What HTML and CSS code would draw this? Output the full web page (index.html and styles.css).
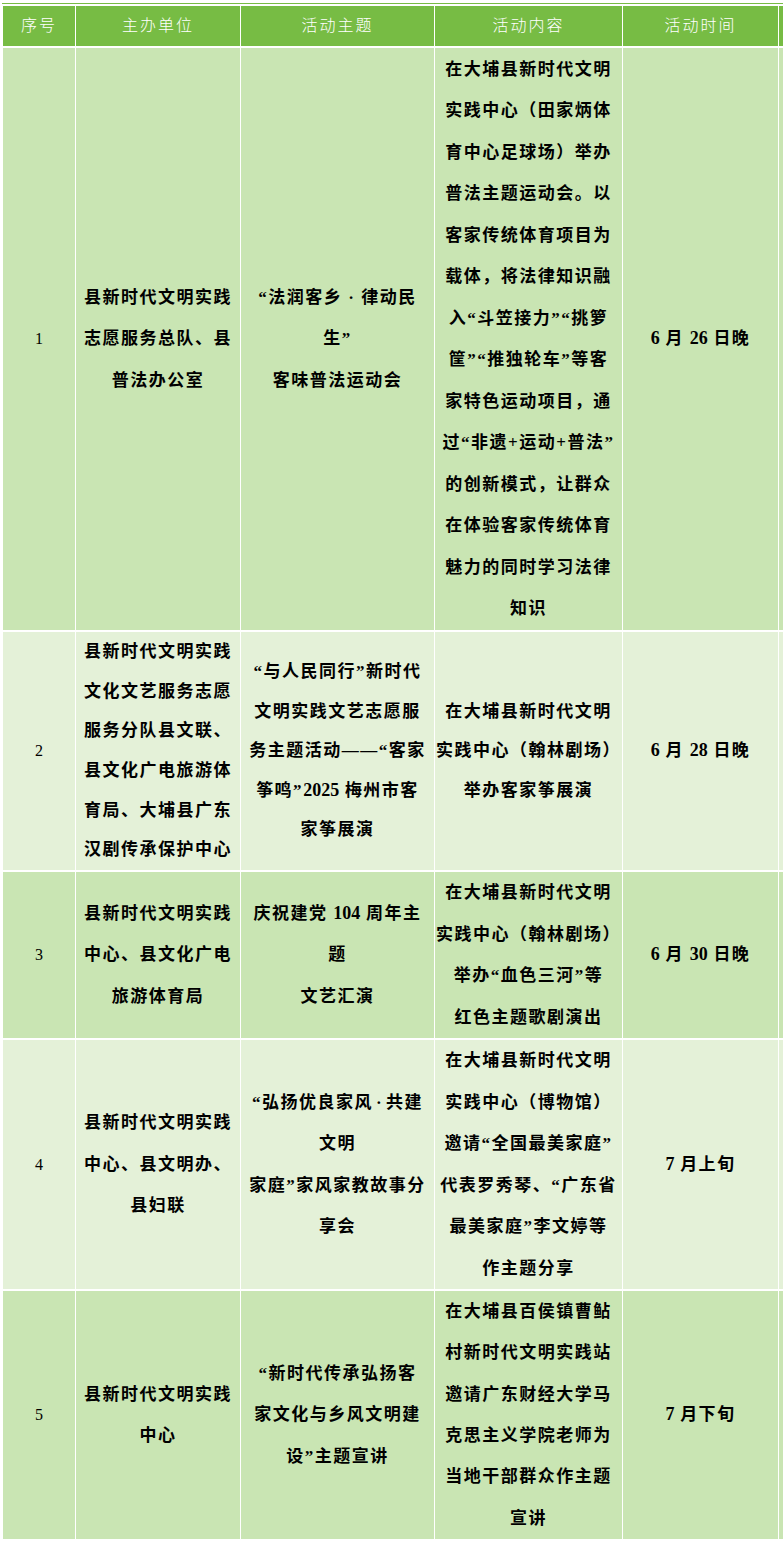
FILE: index.html
```html
<!DOCTYPE html>
<html lang="zh-CN">
<head>
<meta charset="utf-8">
<title>活动安排</title>
<link rel="stylesheet" href="styles.css">
</head>
<body>
<div class="page">
<table class="sched">
<colgroup>
<col class="c1"><col class="c2"><col class="c3"><col class="c4"><col class="c5"><col class="c6">
</colgroup>
<thead>
<tr class="head">
<th>序号</th><th>主办单位</th><th>活动主题</th><th>活动内容</th><th>活动时间</th><th></th>
</tr>
</thead>
<tbody>
<tr class="odd r1">
<td class="num">1</td>
<td>县新时代文明实践<br>志愿服务总队、县<br>普法办公室</td>
<td>“法润客乡<span class="dot">·</span>律动民<br>生”<br>客味普法运动会</td>
<td>在大埔县新时代文明<br>实践中心（田家炳体<br>育中心足球场）举办<br>普法主题运动会。以<br>客家传统体育项目为<br>载体，将法律知识融<br>入“斗笠接力”“挑箩<br>筐”“推独轮车”等客<br>家特色运动项目，通<br>过“非遗+运动+普法”<br>的创新模式，让群众<br>在体验客家传统体育<br>魅力的同时学习法律<br>知识</td>
<td><span class="d">6</span> 月 <span class="d">26</span> 日晚</td>
<td></td>
</tr>
<tr class="even r2">
<td class="num">2</td>
<td>县新时代文明实践<br>文化文艺服务志愿<br>服务分队县文联、<br>县文化广电旅游体<br>育局、大埔县广东<br>汉剧传承保护中心</td>
<td>“与人民同行”新时代<br>文明实践文艺志愿服<br>务主题活动——“客家<br>筝鸣”<span class="d">2025</span> 梅州市客<br>家筝展演</td>
<td>在大埔县新时代文明<br>实践中心（翰林剧场）<br>举办客家筝展演</td>
<td><span class="d">6</span> 月 <span class="d">28</span> 日晚</td>
<td></td>
</tr>
<tr class="odd r3">
<td class="num">3</td>
<td>县新时代文明实践<br>中心、县文化广电<br>旅游体育局</td>
<td>庆祝建党 <span class="d">104</span> 周年主<br>题<br>文艺汇演</td>
<td>在大埔县新时代文明<br>实践中心（翰林剧场）<br>举办“血色三河”等<br>红色主题歌剧演出</td>
<td><span class="d">6</span> 月 <span class="d">30</span> 日晚</td>
<td></td>
</tr>
<tr class="even r4">
<td class="num">4</td>
<td>县新时代文明实践<br>中心、县文明办、<br>县妇联</td>
<td>“弘扬优良家风<span class="dot2">·</span>共建<br>文明<br>家庭”家风家教故事分<br>享会</td>
<td>在大埔县新时代文明<br>实践中心（博物馆）<br>邀请“全国最美家庭”<br>代表罗秀琴、“广东省<br>最美家庭”李文婷等<br>作主题分享</td>
<td><span class="d">7</span> 月上旬</td>
<td></td>
</tr>
<tr class="odd r5">
<td class="num">5</td>
<td>县新时代文明实践<br>中心</td>
<td>“新时代传承弘扬客<br>家文化与乡风文明建<br>设”主题宣讲</td>
<td>在大埔县百侯镇曹鲇<br>村新时代文明实践站<br>邀请广东财经大学马<br>克思主义学院老师为<br>当地干部群众作主题<br>宣讲</td>
<td><span class="d">7</span> 月下旬</td>
<td></td>
</tr>
</tbody>
</table>
</div>
</body>
</html>
```

FILE: styles.css
```css
html, body {
  margin: 0;
  padding: 0;
  background: #ffffff;
}

.page {
  width: 783px;
  height: 1541px;
  overflow: hidden;
  padding-top: 3px;
  box-sizing: border-box;
}

.sched {
  margin-left: 2px;
  border-collapse: separate;
  border-spacing: 1px 2px;
  border-top: 1px solid #77bc44;
  table-layout: fixed;
  width: 820px;
}

.c1 { width: 72px; }
.c2 { width: 164px; }
.c3 { width: 193px; }
.c4 { width: 187px; }
.c5 { width: 155px; }
.c6 { width: 42px; }

.head th {
  background: #77bc44;
  color: #ffffff;
  height: 40px;
  padding: 0 0 4px 0;
  box-sizing: border-box;
  font-family: "Noto Sans CJK SC", sans-serif;
  font-weight: 300;
  font-size: 16px;
  letter-spacing: 2px;
  text-align: center;
  vertical-align: middle;
}

td {
  padding: 0;
  text-align: center;
  vertical-align: middle;
  white-space: nowrap;
  color: #000000;
  font-family: "Liberation Serif", "Noto Sans CJK SC", serif;
  font-weight: 700;
  font-size: 17px;
  letter-spacing: 1.5px;
  line-height: 41.5px;
}

td .d {
  letter-spacing: 0;
  font-size: 18px;
}

td .dot {
  margin: 0 6px;
}

td .dot2 {
  margin: 0 3px;
}

td.num {
  font-weight: 400;
  font-size: 16px;
  letter-spacing: 0;
}

.odd td { background: #c9e5b3; }
.even td { background: #e4f1d8; }

.r1 td { height: 582px; }
.r2 td { height: 238px; line-height: 39.6px; }
.r3 td { height: 165px; }
.r4 td { height: 249px; }
.r5 td { height: 248px; line-height: 41.3px; }
```
